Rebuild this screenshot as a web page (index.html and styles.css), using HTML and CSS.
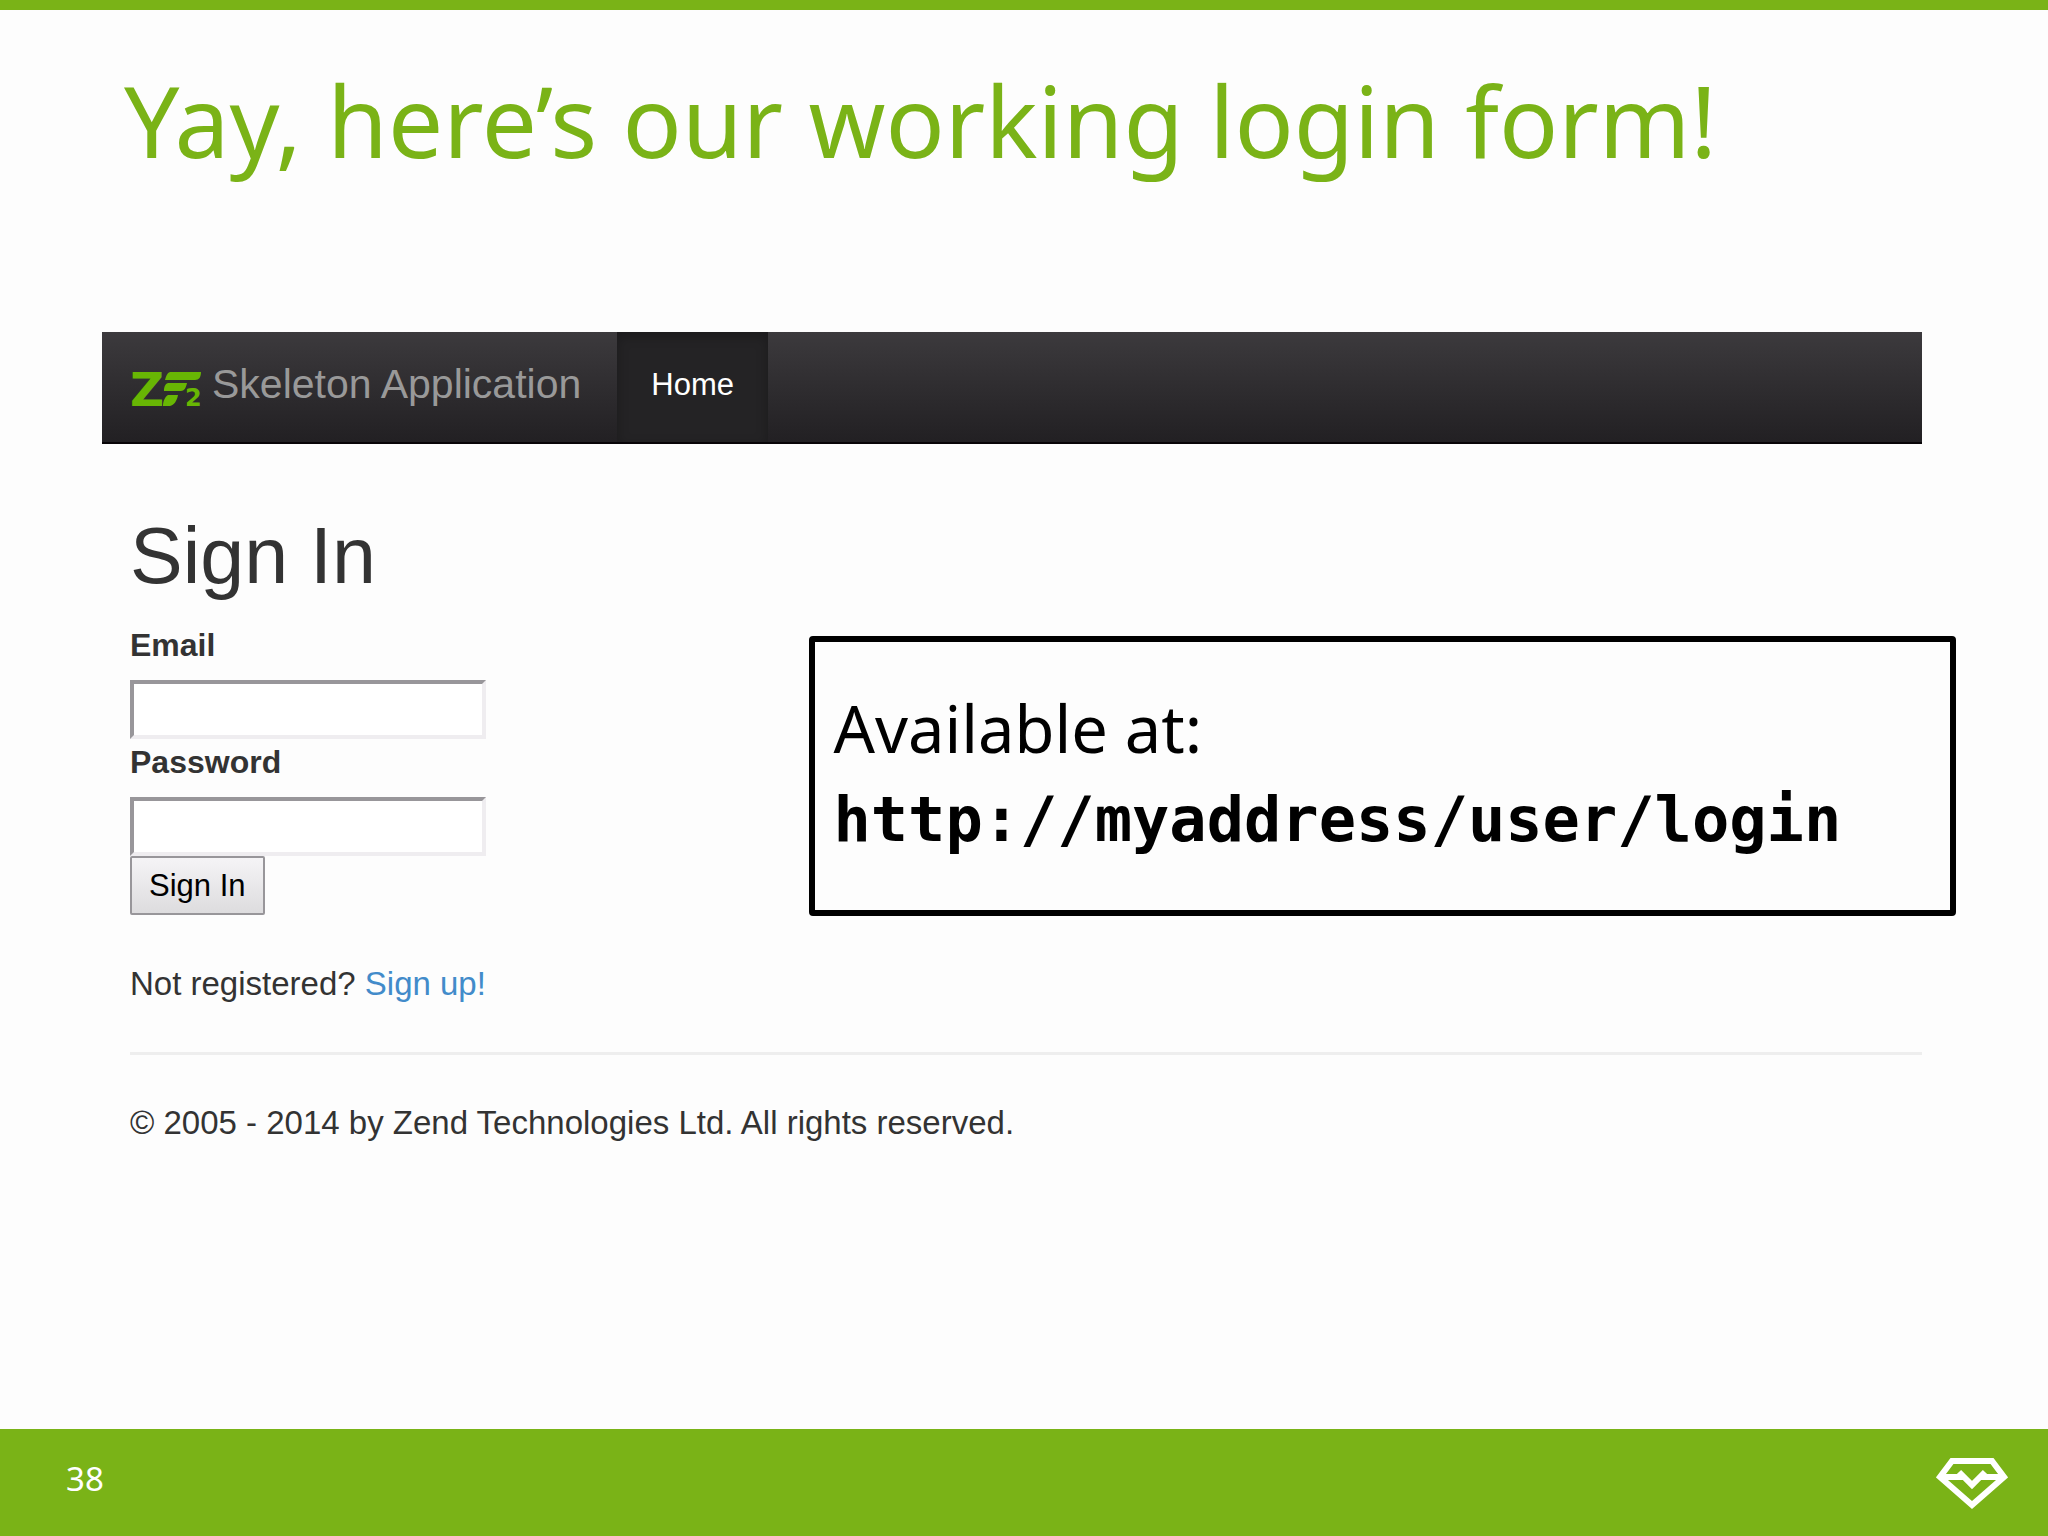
FILE: index.html
```html
<!DOCTYPE html>
<html lang="en">
<head>
    <meta charset="UTF-8">
    <meta name="viewport" content="width=device-width, initial-scale=1.0">
    <title>Yay, here’s our working login form!</title>
    <link rel="stylesheet" href="styles.css">
</head>

<body>
<header class="slide-header">
    <h1>Yay, here’s our working login form!</h1>
</header>

<main class="app">
    <nav class="navbar">
        <a class="brand" href="#">
            <svg class="brand-logo" viewBox="0 0 72 56" aria-hidden="true">
                <text class="logo-z" x="0" y="46">Z</text>
                <path d="M40 12h31c0 5-2 8-6 8H35c1-4 2-7 5-8z M38 23h19c-1 5-3 8-6 8H34c0-4 1-7 4-8z M38 35h10c-1 6-4 10-8 11h-7c0-5 2-9 5-11z"/>
                <text class="logo-2" x="55" y="46">2</text>
            </svg>
            Skeleton Application
        </a>
        <a class="nav-link" href="#">Home</a>
    </nav>

    <div class="content">
        <h2>Sign In</h2>
        <form class="login-form">
            <label for="email">Email</label>
            <input type="text" id="email" name="email">
            <label for="password">Password</label>
            <input type="password" id="password" name="password">
            <button type="submit">Sign In</button>
        </form>
        <p class="signup">Not registered? <a href="#">Sign up!</a></p>
        <hr>
        <p class="copyright">© 2005 - 2014 by Zend Technologies Ltd. All rights reserved.</p>
    </div>

    <!-- Callout over the app -->
    <aside class="callout">
        <p>Available at:</p>
        <p class="url">http://myaddress/user/login</p>
    </aside>
</main>

<footer class="slide-footer">
    <span>38</span>
    <svg class="footer-logo" viewBox="0 0 72 52" aria-hidden="true">
        <path d="M16 3h40l12 16-32 28L4 19z M4 19h23 M45 19h23 M23 14l13 13 13-13"/>
    </svg>
</footer>
</body>
</html>
```

FILE: styles.css
```css
* {
    margin: 0;
    padding: 0;
    box-sizing: border-box;
}

body {
    display: flex;
    flex-direction: column;
    min-height: 100vh;
    background-color: #fdfdfd;
    color: #333;
    font-family: "Liberation Sans", Arial, sans-serif;
    font-size: 33px;
    line-height: 46px;
}

a {
    color: #428bca;
    text-decoration: none;
}

.slide-header {
    border-top: 10px solid #7ab317;
    padding: 42px 124px 0;
}

h1 {
    color: #7ab317;
    font-family: "Noto Sans", sans-serif;
    font-size: 98px;
    font-weight: 400;
    line-height: 136px;
}

.app {
    position: relative;
    flex: 1;
    margin: 144px 126px 0 102px;
}

.navbar {
    display: flex;
    height: 112px;
    background-image: linear-gradient(#3c3a3d, #222023);
    border-bottom: 2px solid #080508;
}

.brand {
    display: flex;
    align-items: center;
    gap: 10px;
    padding: 0 36px 6px 28px;
    color: #999;
    font-size: 41px;
}

.brand-logo {
    width: 72px;
    height: 56px;
    margin-top: 8px;
    fill: #68b604;
    font-family: "DejaVu Sans", sans-serif;
    font-weight: bold;
}

.logo-z {
    font-size: 47px;
}

.logo-2 {
    font-size: 24px;
}

.nav-link {
    display: flex;
    align-items: center;
    padding: 0 34px 4px;
    background-color: #242325;
    box-shadow: inset 0 4px 12px rgba(0, 0, 0, 0.25);
    color: #fff;
    font-size: 31px;
}

.content {
    padding-left: 28px;
}

h2 {
    margin-top: 68px;
    font-size: 79px;
    font-weight: 400;
    line-height: 88px;
}

.login-form {
    display: flex;
    flex-direction: column;
    align-items: flex-start;
    margin-top: 22px;
}

label {
    margin-bottom: 12px;
    font-size: 32px;
    font-weight: bold;
}

input {
    width: 356px;
    height: 59px;
    padding: 4px;
    border: 4px solid;
    border-color: #98969a #efedf0 #efedf0 #98969a;
    background-color: #fff;
    font: inherit;
}

button {
    height: 59px;
    padding: 0 17px;
    border: 2px solid #98969a;
    border-radius: 2px;
    background-image: linear-gradient(#f5f4f6, #dddcde);
    color: #000;
    font-family: inherit;
    font-size: 31px;
    cursor: pointer;
}

.signup {
    margin-top: 46px;
}

hr {
    margin: 45px 0;
    border: 0;
    border-top: 3px solid #eee;
}

.callout {
    position: absolute;
    top: 304px;
    right: -34px;
    width: 63%;
    padding: 40px 18px 44px;
    border: 6px solid #000;
    border-radius: 4px;
    background-color: #fdfdfd;
    color: #000;
    font-family: "Noto Sans", sans-serif;
    font-size: 65px;
    line-height: 92px;
}

.url {
    font-family: "DejaVu Sans Mono", monospace;
    font-size: 62px;
    font-weight: bold;
}

.slide-footer {
    display: flex;
    align-items: center;
    justify-content: space-between;
    height: 107px;
    padding: 2px 40px 0 66px;
    background-color: #7ab317;
    color: #fff;
    font-family: "Noto Sans", sans-serif;
    font-size: 33px;
}

.slide-footer span {
    padding-bottom: 10px;
}

.footer-logo {
    width: 72px;
    height: 52px;
    fill: none;
    stroke: #fff;
    stroke-width: 6;
}
```
